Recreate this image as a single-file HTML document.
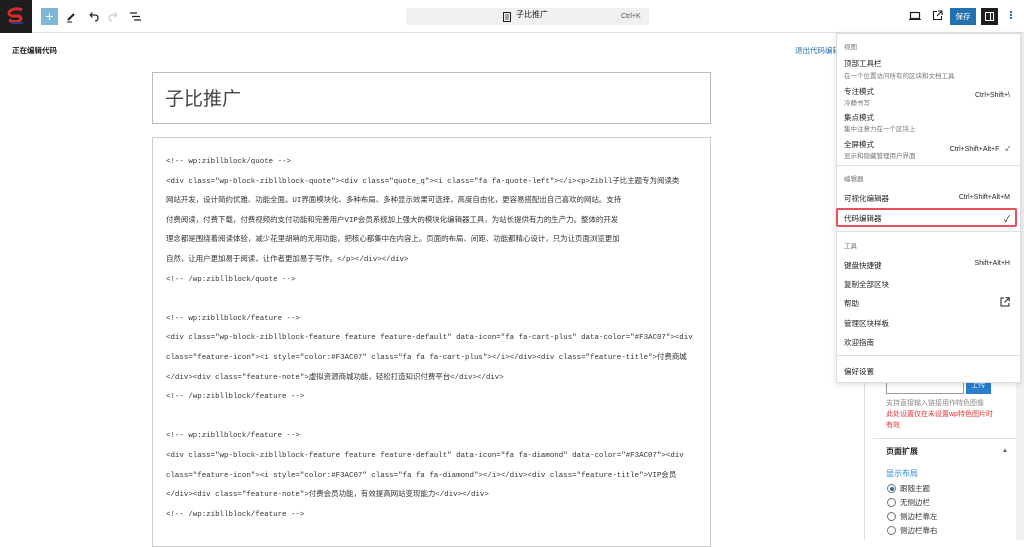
<!DOCTYPE html>
<html><head><meta charset="utf-8"><style>
*{margin:0;padding:0;box-sizing:border-box}
body{width:1024px;height:540px;overflow:hidden;background:#fff;font-family:"Liberation Sans","Noto Sans CJK SC",sans-serif;color:#1e1e1e;position:relative}
.a{position:absolute}
.code{font-family:"Liberation Mono","Noto Sans CJK SC",monospace;font-size:7.45px;color:#333;white-space:nowrap}
.mi{position:absolute;left:844px;font-size:7.5px;color:#1e1e1e}
.ms{position:absolute;left:844px;font-size:6.5px;color:#757575}
.sc{position:absolute;right:14px;font-size:7px;color:#1e1e1e}
.sec{position:absolute;left:844px;font-size:6.5px;color:#757575}
.rad{position:absolute;left:887px;width:9px;height:9px;border:1px solid #777;border-radius:50%}
.rl{position:absolute;left:900px;font-size:7.5px;color:#333}
</style></head><body>
<div class="a" style="left:0;top:0;width:1024px;height:33px;border-bottom:1px solid #e0e0e0"></div>
<div class="a" style="left:0;top:0;width:32px;height:33px;background:#1e1e1e"></div>
<svg class="a" style="left:5px;top:6px" width="22" height="20" viewBox="0 0 22 20"><path d="M17 4 Q11 1 5 5 Q2 9 8 10 L14 10 Q18 12 14 15 Q9 17 4 14" fill="none" stroke="#d62b2b" stroke-width="3"/><path d="M6 17 L18 17" stroke="#2a3a8f" stroke-width="2"/></svg>
<div class="a" style="left:41px;top:8px;width:17px;height:17px;background:#7eb8d8;color:#fff;font-size:14px;line-height:16px;text-align:center">+</div>
<svg class="a" style="left:65px;top:11px" width="12" height="12"><path d="M3 9 L9 3" stroke="#1e1e1e" stroke-width="2"/><path d="M2 11 L7 11" stroke="#1e1e1e"/></svg>
<svg class="a" style="left:87px;top:11px" width="12" height="12"><path d="M3 4 H8 Q11 4 11 7 Q11 10 8 10 M3 4 L5.5 1.5 M3 4 L5.5 6.5" fill="none" stroke="#1e1e1e" stroke-width="1.2"/></svg>
<svg class="a" style="left:108px;top:11px" width="12" height="12"><path d="M9 4 H4 Q1 4 1 7 Q1 10 4 10 M9 4 L6.5 1.5 M9 4 L6.5 6.5" fill="none" stroke="#ccc" stroke-width="1.2"/></svg>
<svg class="a" style="left:129px;top:12px" width="13" height="10"><path d="M1 1H8M3 4.5H11M5 8H12" stroke="#1e1e1e" stroke-width="1.2"/></svg>
<div class="a" style="left:406px;top:8px;width:243px;height:17px;background:#f0f0f0;border-radius:2px"></div>
<svg class="a" style="left:503px;top:12px" width="8" height="10"><rect x="0.5" y="0.5" width="7" height="9" fill="none" stroke="#1e1e1e"/><path d="M2 3H6M2 5H6M2 7H6" stroke="#1e1e1e" stroke-width=".8"/></svg>
<div class="a" style="left:516px;top:9px;font-size:8px">子比推广</div>
<div class="a" style="left:621px;top:13px;font-size:7px;color:#555">Ctrl+K</div>
<svg class="a" style="left:909px;top:11px" width="12" height="10"><rect x="1.5" y="1.5" width="9" height="6" fill="none" stroke="#1e1e1e" stroke-width="1.2"/><path d="M0 8.5H12" stroke="#1e1e1e"/></svg>
<svg class="a" style="left:932px;top:10px" width="11" height="11"><path d="M5 1.5H1.5V9.5H9.5V6M6 1H10V5M10 1L5 6" fill="none" stroke="#1e1e1e" stroke-width="1.1"/></svg>
<div class="a" style="left:950px;top:8px;width:26px;height:17px;background:#2271b1;color:#fff;font-size:7.5px;line-height:17px;text-align:center">保存</div>
<div class="a" style="left:981px;top:8px;width:17px;height:17px;background:#1e1e1e"></div>
<div class="a" style="left:985px;top:12px;width:9px;height:9px;border:1.2px solid #fff"></div>
<div class="a" style="left:990px;top:12px;width:1.2px;height:9px;background:#fff"></div>
<div class="a" style="left:1010px;top:11px;width:2px;height:2px;background:#2271b1;box-shadow:0 3px #2271b1,0 6px #2271b1"></div>
<div class="a" style="left:12px;top:45px;font-size:7.5px;font-weight:bold">正在编辑代码</div>
<div class="a" style="left:795px;top:45px;font-size:7.5px;color:#2271b1">退出代码编辑</div>
<div class="a" style="left:152px;top:72px;width:559px;height:52px;border:1px solid #bbb"></div>
<div class="a" style="left:165px;top:84px;font-size:19px;color:#444">子比推广</div>
<div class="a" style="left:152px;top:137px;width:559px;height:410px;border:1px solid #ccc"></div>
<div class="a code" style="left:166px;top:153px;line-height:19.6px">
&lt;!-- wp:zibllblock/quote --&gt;<br>
&lt;div class="wp-block-zibllblock-quote"&gt;&lt;div class="quote_q"&gt;&lt;i class="fa fa-quote-left"&gt;&lt;/i&gt;&lt;p&gt;Zibll子比主题专为阅读类<br>
网站开发，设计简约优雅、功能全面。UI界面模块化、多种布局、多种显示效果可选择，高度自由化，更容易搭配出自己喜欢的网站。支持<br>
付费阅读，付费下载，付费视频的支付功能和完善用户VIP会员系统加上强大的模块化编辑器工具，为站长提供有力的生产力。整体的开发<br>
理念都是围绕着阅读体验，减少花里胡哨的无用功能，把核心都集中在内容上。页面的布局、间距、功能都精心设计，只为让页面浏览更加<br>
自然，让用户更加易于阅读，让作者更加易于写作。&lt;/p&gt;&lt;/div&gt;&lt;/div&gt;<br>
&lt;!-- /wp:zibllblock/quote --&gt;<br><br>
&lt;!-- wp:zibllblock/feature --&gt;<br>
&lt;div class="wp-block-zibllblock-feature feature feature-default" data-icon="fa fa-cart-plus" data-color="#F3AC07"&gt;&lt;div<br>
class="feature-icon"&gt;&lt;i style="color:#F3AC07" class="fa fa fa-cart-plus"&gt;&lt;/i&gt;&lt;/div&gt;&lt;div class="feature-title"&gt;付费商城<br>
&lt;/div&gt;&lt;div class="feature-note"&gt;虚拟资源商城功能，轻松打造知识付费平台&lt;/div&gt;&lt;/div&gt;<br>
&lt;!-- /wp:zibllblock/feature --&gt;<br><br>
&lt;!-- wp:zibllblock/feature --&gt;<br>
&lt;div class="wp-block-zibllblock-feature feature feature-default" data-icon="fa fa-diamond" data-color="#F3AC07"&gt;&lt;div<br>
class="feature-icon"&gt;&lt;i style="color:#F3AC07" class="fa fa fa-diamond"&gt;&lt;/i&gt;&lt;/div&gt;&lt;div class="feature-title"&gt;VIP会员<br>
&lt;/div&gt;&lt;div class="feature-note"&gt;付费会员功能，有效提高网站变现能力&lt;/div&gt;&lt;/div&gt;<br>
&lt;!-- /wp:zibllblock/feature --&gt;
</div>
<div class="a" style="left:864px;top:33px;width:160px;height:507px;border-left:1px solid #e0e0e0;background:#fff"></div>
<div class="a" style="left:1016px;top:33px;width:8px;height:507px;background:#f1f1f1"></div>
<div class="a" style="left:886px;top:378px;width:78px;height:16px;border:1px solid #999"></div>
<div class="a" style="left:966px;top:378px;width:25px;height:16px;background:#2a7fcf;color:#fff;font-size:7px;text-align:center;line-height:16px">上传</div>
<div class="a" style="left:886px;top:398px;font-size:7px;color:#888">支持直接输入链接用作特色图像</div>
<div class="a" style="left:886px;top:409px;font-size:7px;color:#e33;line-height:11px">此处设置仅在未设置wp特色图片时<br>有效</div>
<div class="a" style="left:873px;top:438px;width:143px;height:1px;background:#e0e0e0"></div>
<div class="a" style="left:886px;top:446px;font-size:8px;font-weight:bold">页面扩展</div>
<div class="a" style="left:1002px;top:448px;font-size:6px;color:#555">▲</div>
<div class="a" style="left:886px;top:468px;font-size:8px;color:#2a8ad8">显示布局</div>
<div class="rad" style="top:484px;border-color:#777"><div style="margin:1.5px;width:4px;height:4px;border-radius:50%;background:#2271b1"></div></div><div class="rl" style="top:483px">跟随主题</div>
<div class="rad" style="top:498px"></div><div class="rl" style="top:497px">无侧边栏</div>
<div class="rad" style="top:512px"></div><div class="rl" style="top:511px">侧边栏靠左</div>
<div class="rad" style="top:526px"></div><div class="rl" style="top:525px">侧边栏靠右</div>
<div class="a" style="left:836px;top:33px;width:185px;height:350px;background:#fff;border:1px solid #ddd;box-shadow:0 2px 6px rgba(0,0,0,.12)"></div>
<div class="sec" style="top:41px">视图</div>
<div class="mi" style="top:58px">顶部工具栏</div><div class="ms" style="top:70px">在一个位置访问所有的区块和文档工具</div>
<div class="mi" style="top:86px">专注模式</div><div class="ms" style="top:97px">冷静书写</div><div class="sc" style="top:92px">Ctrl+Shift+\</div>
<div class="mi" style="top:112px">集点模式</div><div class="ms" style="top:123px">集中注意力在一个区块上</div>
<div class="mi" style="top:139px">全屏模式</div><div class="ms" style="top:150px">显示和隐藏管理用户界面</div><div class="sc" style="top:144px">Ctrl+Shift+Alt+F &nbsp;&nbsp;✓</div>
<div class="a" style="left:836px;top:165px;width:185px;height:1px;background:#e0e0e0"></div>
<div class="sec" style="top:173px">编辑器</div>
<div class="mi" style="top:193px">可视化编辑器</div><div class="sc" style="top:194px">Ctrl+Shift+Alt+M</div>
<div class="a" style="left:836px;top:208px;width:181px;height:19px;border:2px solid #e8505b;border-radius:2px"></div>
<div class="mi" style="top:213px">代码编辑器</div><div class="sc" style="top:212px;font-size:9px">✓</div>
<div class="a" style="left:836px;top:231px;width:185px;height:1px;background:#e0e0e0"></div>
<div class="sec" style="top:240px">工具</div>
<div class="mi" style="top:260px">键盘快捷键</div><div class="sc" style="top:260px">Shift+Alt+H</div>
<div class="mi" style="top:279px">复制全部区块</div>
<div class="mi" style="top:298px">帮助</div>
<svg class="a" style="left:1000px;top:297px" width="10" height="10"><path d="M4 1H1V9H9V6M5.5 0.8H9.2V4.5M9.2 0.8L4.5 5.5" fill="none" stroke="#1e1e1e" stroke-width="1"/></svg>
<div class="mi" style="top:318px">管理区块样板</div>
<div class="mi" style="top:337px">欢迎指南</div>
<div class="a" style="left:836px;top:355px;width:185px;height:1px;background:#e0e0e0"></div>
<div class="mi" style="top:366px">偏好设置</div>
</body></html>
